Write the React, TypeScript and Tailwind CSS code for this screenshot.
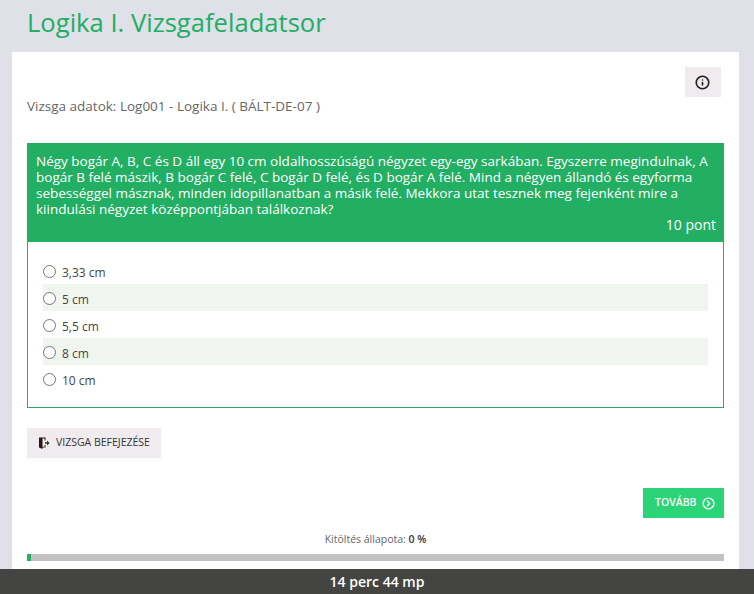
import { CircleChevronRight, Info } from 'lucide-react';

const options = ['3,33 cm', '5 cm', '5,5 cm', '8 cm', '10 cm'];

function DoorIcon() {
  return (
    <svg width="12" height="12" viewBox="0 0 12 12" className="shrink-0">
      <path d="M1 0.5h6.5v3H6.6V1.5H4.5v8.2h2.1V8h0.9v2.6H4.5V12L1 10.5z" fill="#2a1614" />
      <path d="M7 5.3h2V3.6l2.6 2.4L9 8.4V6.7H7z" fill="#333" />
    </svg>
  );
}

export default function App() {
  return (
    <div className="flex h-screen flex-col overflow-hidden bg-[#dfe0e8] font-['Open_Sans',sans-serif]">
      <h1 className="h-[52px] shrink-0 pl-[27px] pt-[5px] text-[25.6px] leading-[36px] text-[#22ae63]">
        Logika I. Vizsgafeladatsor
      </h1>

      <main className="ml-3 mr-[15px] flex-1 bg-white px-[15px]">
        <div className="flex justify-end pt-[15px] pr-[3px]">
          <button className="flex h-[30px] w-9 items-center justify-center bg-[#f0ebee] pr-px text-[#222]">
            <Info size={15} strokeWidth={2.6} />
          </button>
        </div>
        <p className="mt-[-1px] text-[13.5px] leading-[20px] text-[#666]">
          Vizsga adatok: Log001 - Logika I. ( BÁLT-DE-07 )
        </p>

        <section className="mt-[27px] border border-[#22ae63]">
          <div className="h-[98px] bg-[#22ae63] pl-2 pr-[7px] pt-[9px] text-[13.5px] font-medium leading-[16px] text-white">
            <p>
              Négy bogár A, B, C és D áll egy 10 cm oldalhosszúságú négyzet egy-egy sarkában. Egyszerre megindulnak, A
              bogár B felé mászik, B bogár C felé, C bogár D felé, és D bogár A felé. Mind a négyen állandó és egyforma
              sebességgel másznak, minden idopillanatban a másik felé. Mekkora utat tesznek meg fejenként mire a
              kiindulási négyzet középpontjában találkoznak?
            </p>
            <p className="text-right text-[14px] font-normal leading-[16px]">10 pont</p>
          </div>
          <ul className="px-[15px] py-[15px]">
            {options.map((o, i) => (
              <li
                key={o}
                className={`flex h-[27px] items-center gap-[6px] text-[12px] text-[#444] ${i % 2 === 1 ? 'bg-[#f0f5ef]' : ''}`}
              >
                <span className="mt-[1px] h-[13px] w-[13px] shrink-0 rounded-full border border-[#767676] bg-white" />
                <span className="pt-[5px]">{o}</span>
              </li>
            ))}
          </ul>
        </section>

        <button className="mt-5 flex h-[30px] w-[134px] items-center gap-[6px] bg-[#f0ebee] pl-[11px] text-[10.5px] text-[#333]">
          <DoorIcon />
          VIZSGA BEFEJEZÉSE
        </button>

        <div className="mt-[30px] flex justify-end">
          <button className="flex h-[30px] w-[81px] items-center gap-[5px] bg-[#2ad477] pl-3 text-[10.5px] font-semibold text-white">
            TOVÁBB
            <CircleChevronRight size={13} strokeWidth={2.6} />
          </button>
        </div>

        <p className="mt-[13px] text-center text-[10.5px] leading-[16px] text-[#666]">
          Kitöltés állapota: <span className="font-semibold text-[#333]">0 %</span>
        </p>
        <div className="mt-[7px] h-[7px] bg-[#c4c1c4]">
          <div className="h-full w-[4px] bg-[#22ae63]" />
        </div>
      </main>

      <footer className="flex h-[25px] shrink-0 items-center justify-center bg-[#444542] text-[14px] font-semibold text-white">
        14 perc 44 mp
      </footer>
    </div>
  );
}
